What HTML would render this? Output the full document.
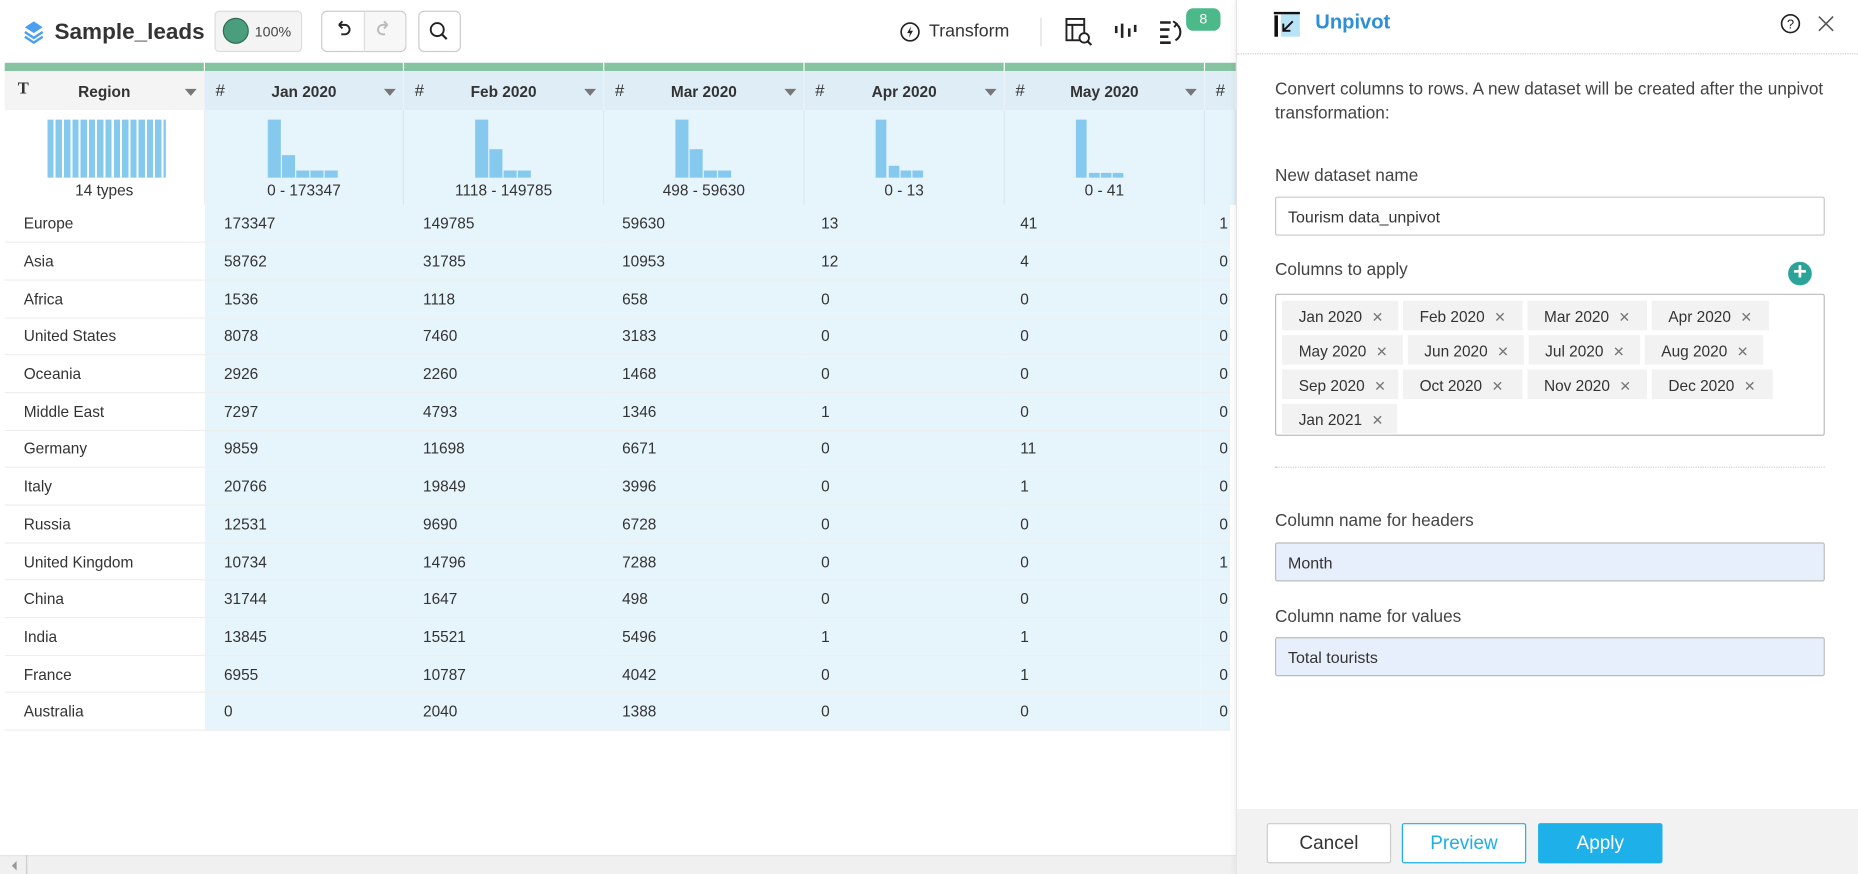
<!DOCTYPE html>
<html><head><meta charset="utf-8"><style>
*{box-sizing:border-box;margin:0;padding:0}
html,body{width:1858px;height:874px;overflow:hidden;background:#fff}
#s{position:absolute;left:0;top:0;width:1568px;height:738px;transform:scale(1.18495,1.1843);transform-origin:0 0;font-family:"Liberation Sans",sans-serif;color:#333}
.a{position:absolute}
.hdr{top:60px;height:33px;background:#dfedf6;border-right:1px solid #eaf3f9;font-size:13px;font-weight:bold;color:#333}
.hdr .t{position:absolute;left:0;right:0;top:10px;text-align:center}
.hdr .h{position:absolute;left:9px;top:8px;font-weight:normal;font-size:14px}
.hdr .c{position:absolute;right:6px;top:15px;width:0;height:0;border-left:5px solid transparent;border-right:5px solid transparent;border-top:6px solid #777}
.hist{top:93px;height:80px;background:#e6f4fc;border-right:1px solid #d8e8f2}
.hist .l{position:absolute;left:0;right:0;top:60px;text-align:center;font-size:13px;color:#333}
.bar{position:absolute;background:#86c9ef;width:11px}
table{position:absolute;left:4px;top:173px;border-collapse:collapse;font-size:13px;color:#333}
td{height:31.7px;border-bottom:1px solid #eeeeee;padding-left:16px;background:#e6f4fc;width:168px}
td:first-child{background:#fff;width:169px}
td:last-child{width:25px}
.lbl{position:absolute;left:1076px;font-size:14.5px;color:#444}
.inp{position:absolute;left:1076px;width:464px;height:33px;border:1px solid #c8c8c8;border-radius:2px;font-size:13.5px;padding:9px 0 0 10px;color:#333}
.tag{display:inline-block;white-space:nowrap;overflow:hidden;background:#f2f2f2;height:25px;font-size:13px;color:#333;padding:6px 0 0 14px;margin:0 4px 4px 0;vertical-align:top}
.tag i{font-style:normal;color:#777;margin-left:8px;font-size:12px}
.btn{position:absolute;top:695px;width:105px;height:34px;font-size:16px;text-align:center;padding-top:8px;border-radius:2px}
</style></head><body><div id="s">
<svg class="a" style="left:20px;top:17px" width="17" height="20" viewBox="0 0 17 20"><path d="M8.5 1L16 6 8.5 11 1 6z" fill="#4a9ff0"/><path d="M1 10l7.5 5 7.5-5" stroke="#4a9ff0" stroke-width="2" fill="none"/><path d="M1 14l7.5 5 7.5-5" stroke="#4a9ff0" stroke-width="2" fill="none"/></svg>
<div class="a" style="left:46px;top:17px;font-size:19px;font-weight:bold;color:#333">Sample_leads</div>
<div class="a" style="left:181px;top:9px;width:74px;height:35px;background:#f4f4f4;border:1px solid #ddd;border-radius:4px"></div>
<div class="a" style="left:188px;top:15px;width:22px;height:22px;border-radius:50%;background:#4a9e7e;border:1px solid #2d6b53"></div>
<div class="a" style="left:215px;top:20px;font-size:12px;color:#444">100%</div>
<div class="a" style="left:271px;top:9px;width:72px;height:35px;border:1px solid #ccc;border-radius:5px"></div>
<div class="a" style="left:307px;top:9px;width:1px;height:35px;background:#ddd"></div>
<div class="a" style="left:308px;top:10px;width:34px;height:33px;background:#f7f7f7;border-radius:0 4px 4px 0"></div>
<svg class="a" style="left:281px;top:17px" width="18" height="18" viewBox="0 0 18 18"><path d="M5 4h5a4 4 0 010 8H7M5 4l3-3M5 4l3 3" stroke="#222" stroke-width="1.6" fill="none"/></svg>
<svg class="a" style="left:315px;top:17px" width="18" height="18" viewBox="0 0 18 18"><path d="M12 4H8a4 4 0 000 8h2M12 4L9 1M12 4L9 7" stroke="#bbb" stroke-width="1.6" fill="none"/></svg>
<div class="a" style="left:353px;top:9px;width:36px;height:35px;border:1px solid #ccc;border-radius:5px"></div>
<svg class="a" style="left:361px;top:17px" width="20" height="20" viewBox="0 0 20 20"><circle cx="8" cy="8" r="5.5" stroke="#222" stroke-width="1.6" fill="none"/><path d="M12 12l4 4" stroke="#222" stroke-width="1.8"/></svg>
<svg class="a" style="left:759px;top:18px" width="18" height="18" viewBox="0 0 18 18"><circle cx="9" cy="9" r="7.5" stroke="#222" stroke-width="1.4" fill="none"/><path d="M10 4L6.5 10H9L8 14 11.5 8H9z" fill="#222"/></svg>
<div class="a" style="left:784px;top:18px;font-size:15px;color:#333">Transform</div>
<div class="a" style="left:878px;top:15px;width:1px;height:24px;background:#ddd"></div>
<svg class="a" style="left:898px;top:14px" width="26" height="26" viewBox="0 0 26 26"><rect x="2" y="2" width="15" height="18" stroke="#222" stroke-width="1.6" fill="none"/><path d="M2 7h15M7 7v13" stroke="#222" stroke-width="1.6"/><circle cx="17" cy="18" r="4" fill="#fff" stroke="#222" stroke-width="1.6"/><path d="M20 21l3 3" stroke="#222" stroke-width="1.8"/></svg>
<svg class="a" style="left:940px;top:17px" width="22" height="18" viewBox="0 0 22 18"><path d="M2 5v6M7 3v12M13 7v7M18 4v6" stroke="#222" stroke-width="2.2"/></svg>
<svg class="a" style="left:978px;top:16px" width="24" height="22" viewBox="0 0 24 22"><path d="M1 3h9M1 9h8M1 15h7M1 20h9" stroke="#222" stroke-width="2.2"/><path d="M14 4a8 8 0 010 14" stroke="#222" stroke-width="1.8" fill="none"/><path d="M12 2l3 2-2 3" stroke="#222" stroke-width="1.6" fill="none"/></svg>
<div class="a" style="left:1001px;top:7px;width:29px;height:19px;background:#4cb98a;border-radius:6px;color:#fff;font-size:12px;text-align:center;padding-top:2px">8</div>
<div class="a" style="left:4px;top:53px;width:1039px;height:7px;background:#86c3a0"></div>
<div class="a" style="left:172px;top:53px;width:1px;height:7px;background:#fff"></div>
<div class="a" style="left:340px;top:53px;width:1px;height:7px;background:#fff"></div>
<div class="a" style="left:509px;top:53px;width:1px;height:7px;background:#fff"></div>
<div class="a" style="left:678px;top:53px;width:1px;height:7px;background:#fff"></div>
<div class="a" style="left:847px;top:53px;width:1px;height:7px;background:#fff"></div>
<div class="a" style="left:1016px;top:53px;width:1px;height:7px;background:#fff"></div>
<div class="a hdr" style="left:4px;width:169px;background:#f4f4f4"><span class="h" style="font-family:'Liberation Serif',serif;font-weight:bold;left:11px">T</span><span class="t">Region</span><span class="c"></span></div>
<div class="a hdr" style="left:173px;width:168px"><span class="h">#</span><span class="t">Jan 2020</span><span class="c"></span></div>
<div class="a hdr" style="left:341px;width:169px"><span class="h">#</span><span class="t">Feb 2020</span><span class="c"></span></div>
<div class="a hdr" style="left:510px;width:169px"><span class="h">#</span><span class="t">Mar 2020</span><span class="c"></span></div>
<div class="a hdr" style="left:679px;width:169px"><span class="h">#</span><span class="t">Apr 2020</span><span class="c"></span></div>
<div class="a hdr" style="left:848px;width:169px"><span class="h">#</span><span class="t">May 2020</span><span class="c"></span></div>
<div class="a hdr" style="left:1017px;width:26px"><span class="h">#</span></div>
<div class="a hist" style="left:4px;width:169px;background:#fff;border-right:1px solid #eee"><span class="l">14 types</span></div>
<div class="a" style="left:40px;top:101px;width:100px;height:49px;background:repeating-linear-gradient(90deg,#86c9ef 0 5.3px,#fff 5.3px 7px)"></div>
<div class="a hist" style="left:173px;width:168px"><span class="l">0 - 173347</span></div>
<div class="bar a" style="left:226px;top:101px;height:49px"></div><div class="bar a" style="left:238px;top:131px;height:19px"></div><div class="bar a" style="left:250px;top:144px;height:6px"></div><div class="bar a" style="left:262px;top:144px;height:6px"></div><div class="bar a" style="left:274px;top:144px;height:6px"></div>
<div class="a hist" style="left:341px;width:169px"><span class="l">1118 - 149785</span></div>
<div class="bar a" style="left:401px;top:101px;height:49px"></div><div class="bar a" style="left:413px;top:126px;height:24px"></div><div class="bar a" style="left:425px;top:144px;height:6px"></div><div class="bar a" style="left:437px;top:144px;height:6px"></div>
<div class="a hist" style="left:510px;width:169px"><span class="l">498 - 59630</span></div>
<div class="bar a" style="left:570px;top:101px;height:49px"></div><div class="bar a" style="left:582px;top:126px;height:24px"></div><div class="bar a" style="left:594px;top:144px;height:6px"></div><div class="bar a" style="left:606px;top:144px;height:6px"></div>
<div class="a hist" style="left:679px;width:169px"><span class="l">0 - 13</span></div>
<div class="bar a" style="left:739px;top:101px;height:49px;width:9px"></div><div class="bar a" style="left:750px;top:140px;height:10px;width:9px"></div><div class="bar a" style="left:760px;top:144px;height:6px;width:9px"></div><div class="bar a" style="left:770px;top:144px;height:6px;width:9px"></div>
<div class="a hist" style="left:848px;width:169px"><span class="l">0 - 41</span></div>
<div class="bar a" style="left:908px;top:101px;height:49px;width:9px"></div><div class="bar a" style="left:919px;top:146px;height:4px;width:9px"></div><div class="bar a" style="left:929px;top:146px;height:4px;width:9px"></div><div class="bar a" style="left:939px;top:146px;height:4px;width:9px"></div>
<div class="a hist" style="left:1017px;width:26px"></div>
<table>
<tr><td>Europe</td><td>173347</td><td>149785</td><td>59630</td><td>13</td><td>41</td><td>1</td></tr>
<tr><td>Asia</td><td>58762</td><td>31785</td><td>10953</td><td>12</td><td>4</td><td>0</td></tr>
<tr><td>Africa</td><td>1536</td><td>1118</td><td>658</td><td>0</td><td>0</td><td>0</td></tr>
<tr><td>United States</td><td>8078</td><td>7460</td><td>3183</td><td>0</td><td>0</td><td>0</td></tr>
<tr><td>Oceania</td><td>2926</td><td>2260</td><td>1468</td><td>0</td><td>0</td><td>0</td></tr>
<tr><td>Middle East</td><td>7297</td><td>4793</td><td>1346</td><td>1</td><td>0</td><td>0</td></tr>
<tr><td>Germany</td><td>9859</td><td>11698</td><td>6671</td><td>0</td><td>11</td><td>0</td></tr>
<tr><td>Italy</td><td>20766</td><td>19849</td><td>3996</td><td>0</td><td>1</td><td>0</td></tr>
<tr><td>Russia</td><td>12531</td><td>9690</td><td>6728</td><td>0</td><td>0</td><td>0</td></tr>
<tr><td>United Kingdom</td><td>10734</td><td>14796</td><td>7288</td><td>0</td><td>0</td><td>1</td></tr>
<tr><td>China</td><td>31744</td><td>1647</td><td>498</td><td>0</td><td>0</td><td>0</td></tr>
<tr><td>India</td><td>13845</td><td>15521</td><td>5496</td><td>1</td><td>1</td><td>0</td></tr>
<tr><td>France</td><td>6955</td><td>10787</td><td>4042</td><td>0</td><td>1</td><td>0</td></tr>
<tr><td>Australia</td><td>0</td><td>2040</td><td>1388</td><td>0</td><td>0</td><td>0</td></tr>
</table>
<div class="a" style="left:0;top:722px;width:1043px;height:16px;background:#f0f0f0;border-top:1px solid #e4e4e4"></div>
<div class="a" style="left:22px;top:722px;width:1px;height:16px;background:#ccc"></div>
<div class="a" style="left:10px;top:727px;width:0;height:0;border-top:4px solid transparent;border-bottom:4px solid transparent;border-right:4px solid #999"></div>
<div class="a" style="left:1043px;top:0;width:525px;height:738px;background:#fff;border-left:1px solid #e4e4e4;box-shadow:-2px 0 4px rgba(0,0,0,.05)"></div>
<div class="a" style="left:1044px;top:45px;width:524px;border-top:1px dotted #ccc"></div>
<svg class="a" style="left:1074px;top:9px" width="24" height="24" viewBox="0 0 24 24"><rect x="7" y="2" width="16" height="20" fill="#b9e3f7"/><path d="M1 2h22" stroke="#111" stroke-width="2"/><path d="M3 4v18" stroke="#111" stroke-width="3"/><path d="M17 9l-8 8M9 11v6h6" stroke="#111" stroke-width="1.6" fill="none"/></svg>
<div class="a" style="left:1110px;top:9px;font-size:17px;font-weight:bold;color:#2d8fd8">Unpivot</div>
<svg class="a" style="left:1502px;top:11px" width="18" height="18" viewBox="0 0 18 18"><circle cx="9" cy="9" r="7.5" stroke="#222" stroke-width="1.4" fill="none"/><text x="9" y="13" text-anchor="middle" font-size="11" font-family="Liberation Sans" fill="#222">?</text></svg>
<svg class="a" style="left:1533px;top:12px" width="16" height="16" viewBox="0 0 16 16"><path d="M2 2l12 12M14 2L2 14" stroke="#555" stroke-width="1.3"/></svg>
<div class="lbl" style="top:66px;line-height:20px;width:480px;color:#444">Convert columns to rows. A new dataset will be created after the unpivot transformation:</div>
<div class="lbl" style="top:141px">New dataset name</div>
<div class="inp" style="top:166px">Tourism data_unpivot</div>
<div class="lbl" style="top:220px">Columns to apply</div>
<div class="a" style="left:1509px;top:221px;width:20px;height:20px;border-radius:50%;background:#2aa399;color:#fff;font-size:20px;line-height:19px;text-align:center;font-weight:bold">+</div>
<div class="a" style="left:1076px;top:248px;width:464px;height:120px;border:1px solid #bbb;border-radius:2px;padding:5px 0 0 5px;font-size:0">
<span class="tag" style="width:98px">Jan 2020<i>✕</i></span><span class="tag" style="width:101px">Feb 2020<i>✕</i></span><span class="tag" style="width:101px">Mar 2020<i>✕</i></span><span class="tag" style="width:99px">Apr 2020<i>✕</i></span><br>
<span class="tag" style="width:102px">May 2020<i>✕</i></span><span class="tag" style="width:98px">Jun 2020<i>✕</i></span><span class="tag" style="width:94px">Jul 2020<i>✕</i></span><span class="tag" style="width:100px">Aug 2020<i>✕</i></span><br>
<span class="tag" style="width:98px">Sep 2020<i>✕</i></span><span class="tag" style="width:101px">Oct 2020<i>✕</i></span><span class="tag" style="width:101px">Nov 2020<i>✕</i></span><span class="tag" style="width:102px">Dec 2020<i>✕</i></span><br>
<span class="tag" style="width:97px">Jan 2021<i>✕</i></span>
</div>
<div class="a" style="left:1076px;top:394px;width:464px;border-top:1px dotted #ccc"></div>
<div class="lbl" style="top:432px">Column name for headers</div>
<div class="inp" style="top:458px;background:#e8effc;border-color:#bbb">Month</div>
<div class="lbl" style="top:513px">Column name for values</div>
<div class="inp" style="top:538px;background:#e8effc;border-color:#bbb">Total tourists</div>
<div class="a" style="left:1044px;top:683px;width:524px;height:55px;background:#f2f2f2"></div>
<div class="btn" style="left:1069px;background:#fff;border:1px solid #ccc;color:#333">Cancel</div>
<div class="btn" style="left:1183px;background:#fff;border:1px solid #1eaee8;color:#1eaee8">Preview</div>
<div class="btn" style="left:1298px;background:#1eb0e8;color:#fff;border:1px solid #1eb0e8">Apply</div>
</div></body></html>
